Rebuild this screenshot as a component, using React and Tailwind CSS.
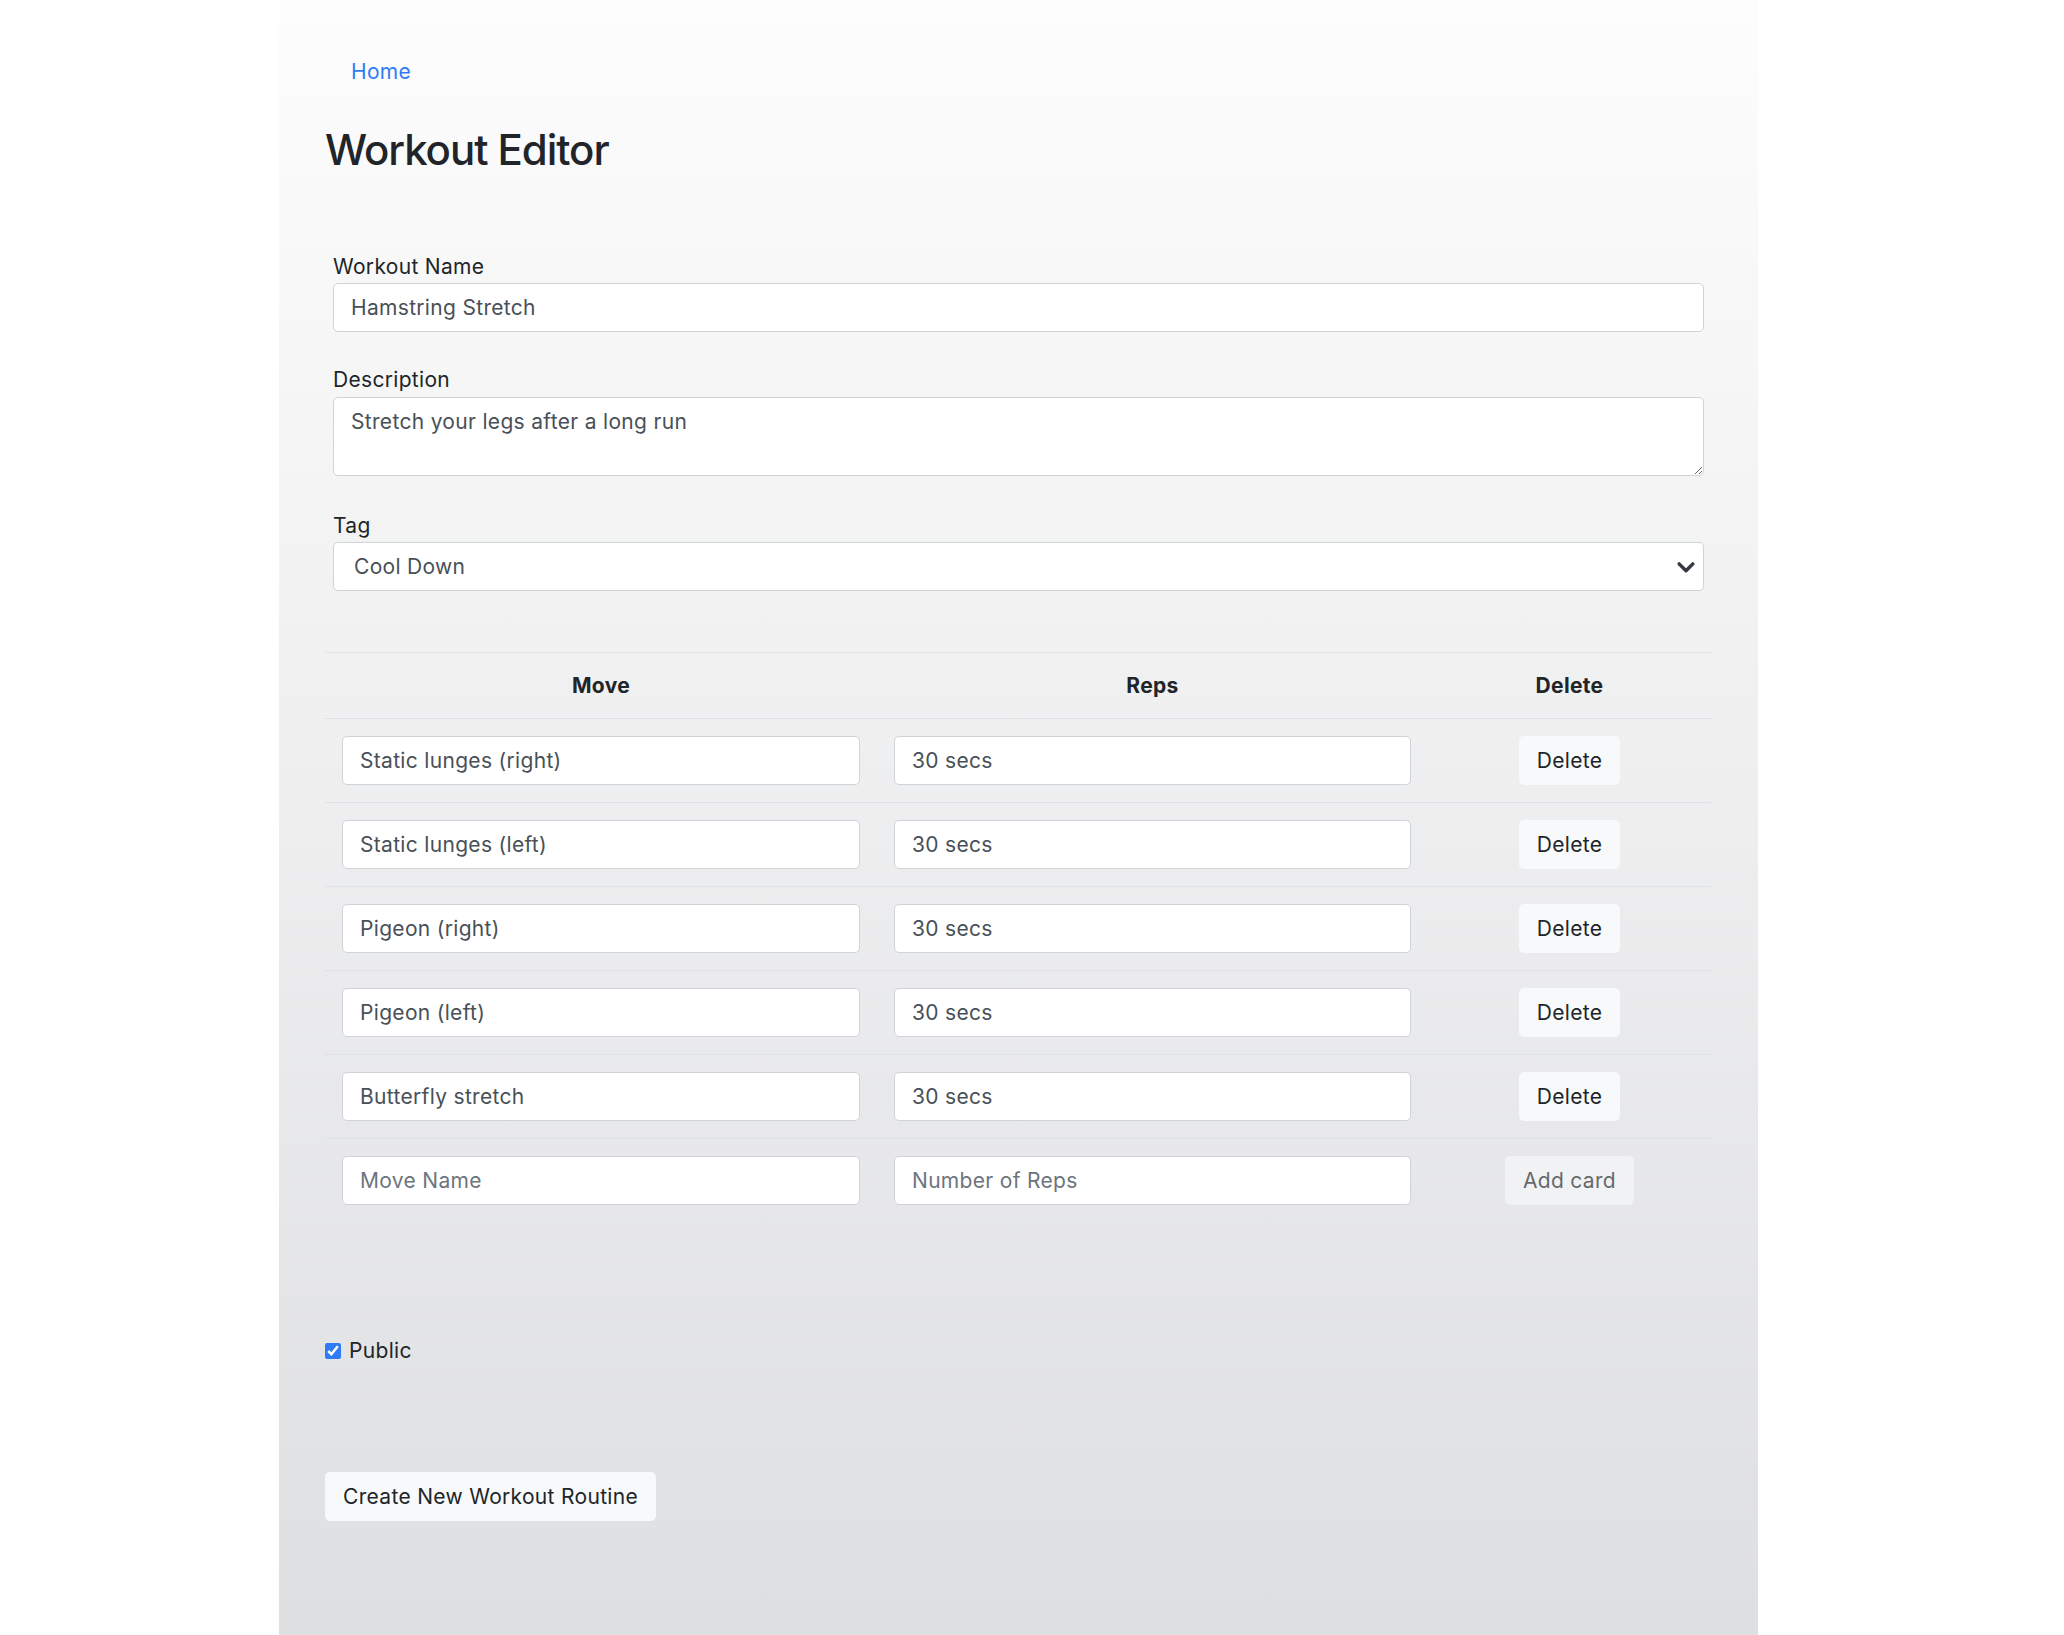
import React from "react";

const MOVES = [
  { name: "Static lunges (right)", reps: "30 secs" },
  { name: "Static lunges (left)", reps: "30 secs" },
  { name: "Pigeon (right)", reps: "30 secs" },
  { name: "Pigeon (left)", reps: "30 secs" },
  { name: "Butterfly stretch", reps: "30 secs" },
];

const inputCls =
  "block w-full h-[49px] bg-white border border-[#ced4da] rounded-[5px] px-[17px] text-[21px] tracking-[0.015em] text-[#495057] placeholder:text-[#6c757d] outline-none";

function Field({ label, children }) {
  return (
    <div>
      <label className="block text-[21px] leading-[32px] tracking-[0.015em] text-[#212529]">{label}</label>
      {children}
    </div>
  );
}

function MoveRow({ name, reps, isNew }) {
  return (
    <div className="grid grid-cols-[552px_551px_283px] h-[84px] border-t border-[#dee2e6] items-center">
      <div className="px-[17px]">
        <input className={inputCls} defaultValue={name} placeholder="Move Name" />
      </div>
      <div className="px-[17px]">
        <input className={inputCls} defaultValue={reps} placeholder="Number of Reps" />
      </div>
      <div className="flex justify-center">
        {isNew ? (
          <button className="h-[49px] px-[18px] rounded-[5px] bg-[#f8f9fa] text-[21px] tracking-[0.015em] text-[#212529] opacity-[0.65]">
            Add card
          </button>
        ) : (
          <button className="h-[49px] px-[18px] rounded-[5px] bg-[#f8f9fa] text-[21px] tracking-[0.015em] text-[#212529]">
            Delete
          </button>
        )}
      </div>
    </div>
  );
}

export default function App() {
  return (
    <div className="min-h-screen bg-white" style={{ fontFamily: "Inter, 'Noto Sans', sans-serif" }}>
      <div className="ml-[279px] w-[1479px] min-h-[1635px] bg-linear-to-b from-[#fdfdfd] to-[#dedfe1] px-[46px] pt-[56px] pb-[80px]">
        {/* nav */}
        <nav className="pl-[26px] h-[32px]">
          <a href="#" className="text-[21px] leading-[32px] tracking-[0.015em] text-[#2f7bf5]">
            Home
          </a>
        </nav>

        <h2 className="mt-[36px] text-[42px] leading-[52px] font-medium text-[#212529] tracking-[-0.025em]">
          Workout Editor
        </h2>

        {/* form */}
        <div className="mt-[75px] px-[8px]">
          <Field label="Workout Name">
            <input className={inputCls} defaultValue="Hamstring Stretch" />
          </Field>
          <div className="mt-[32px]">
            <Field label="Description">
              <textarea
                className="block w-full h-[79px] mt-px bg-white border border-[#ced4da] rounded-[5px] px-[17px] py-[8px] text-[21px] leading-[32px] tracking-[0.015em] text-[#495057] outline-none"
                defaultValue="Stretch your legs after a long run"
              />
            </Field>
          </div>
          <div className="mt-[34px]">
            <Field label="Tag">
              <div className="relative">
                <select
                  className="block w-full h-[49px] appearance-none bg-white border border-[#ced4da] rounded-[5px] pl-[20px] pr-[48px] text-[21px] tracking-[0.015em] text-[#495057] outline-none"
                  defaultValue="cool"
                >
                  <option value="warm">Warm Up</option>
                  <option value="cool">Cool Down</option>
                  <option value="strength">Strength</option>
                </select>
                <svg
                  className="absolute right-[8px] top-1/2 -translate-y-1/2 pointer-events-none"
                  width="20"
                  height="20"
                  viewBox="0 0 16 16"
                  fill="none"
                  stroke="#343a40"
                  strokeWidth="2.8"
                  strokeLinecap="round"
                  strokeLinejoin="round"
                >
                  <path d="M2.5 5.5l5.5 5.5 5.5-5.5" />
                </svg>
              </div>
            </Field>
          </div>
        </div>

        {/* moves table */}
        <div className="mt-[61px] w-[1386px]">
          <div className="grid grid-cols-[552px_551px_283px] border-t border-[#dee2e6] h-[66px] items-center text-[21px] tracking-[0.015em] font-bold text-[#212529] text-center">
            <div>Move</div>
            <div>Reps</div>
            <div>Delete</div>
          </div>
          {MOVES.map((m, i) => (
            <MoveRow key={i} name={m.name} reps={m.reps} />
          ))}
          <MoveRow name="" reps="" isNew />
        </div>

        {/* public */}
        <label className="mt-[113px] flex items-center gap-[8px] h-[32px] text-[21px] tracking-[0.015em] text-[#212529]">
          <input type="checkbox" defaultChecked className="w-[16px] h-[16px] accent-[#2f7bf5]" />
          Public
        </label>

        <button className="mt-[105px] h-[49px] px-[18px] rounded-[5px] bg-[#f8f9fa] text-[21px] tracking-[0.015em] text-[#212529]">
          Create New Workout Routine
        </button>
      </div>
    </div>
  );
}
